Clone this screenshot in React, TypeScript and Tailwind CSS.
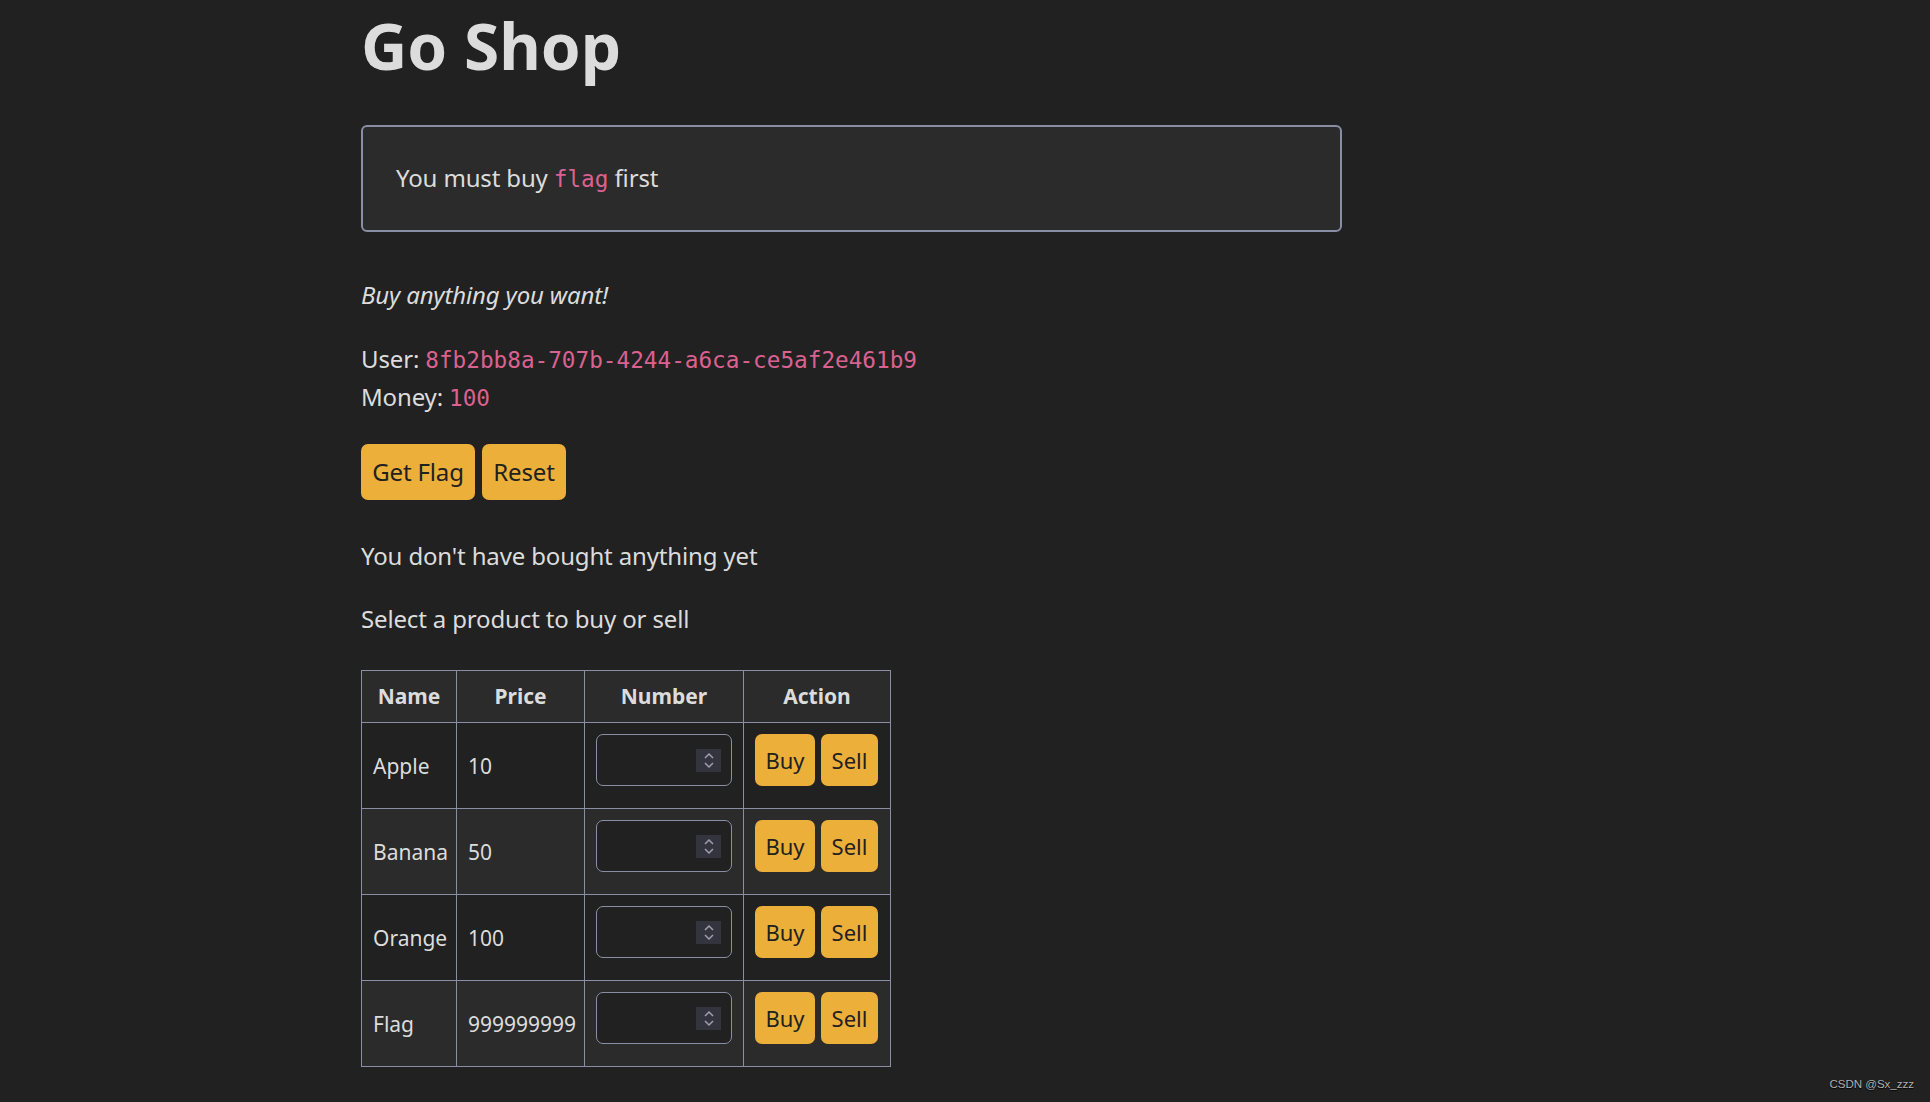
import React from "react";

const products = [
  { name: "Apple", price: "10" },
  { name: "Banana", price: "50" },
  { name: "Orange", price: "100" },
  { name: "Flag", price: "999999999" },
];

function NumberInput() {
  return (
    <div className="mb-[11px] flex h-[52px] w-[136px] items-center justify-end rounded-[7px] border border-[#898ea4] bg-[#212121] pr-[10px]">
      <div className="flex h-[23px] w-[25px] items-center justify-center bg-[#34343e]">
        <svg width="14" height="19" viewBox="0 0 14 19" fill="none">
          <path d="M3 7 L7 3 L11 7" stroke="#a0a0ae" strokeWidth="1.5" />
          <path d="M3 12 L7 16 L11 12" stroke="#a0a0ae" strokeWidth="1.5" />
        </svg>
      </div>
    </div>
  );
}

export default function App() {
  return (
    <div className="relative min-h-screen bg-[#212121] font-['Noto_Sans',sans-serif] text-[#dcdcdc]">
      <div className="ml-[361px] w-[981px] pb-[34px]">
        <h1 className="pt-[9px] text-[64px] font-bold leading-[74px] text-[#dcdcdc]">Go Shop</h1>

        <div className="mt-[42px] rounded-[6px] border-2 border-[#898ea4] bg-[#2b2b2b] px-[33px] pt-[32px] pb-[33px] text-[24px] leading-[38px] tracking-[-0.15px]">
          You must buy{" "}
          <code className="font-['DejaVu_Sans_Mono',monospace] text-[22.7px] leading-none tracking-normal text-[#db6190]">flag</code>{" "}
          first
        </div>

        <p className="mt-[44px] text-[24px] italic leading-[38px] tracking-[-0.15px]">Buy anything you want!</p>

        <p className="mt-[26px] text-[24px] leading-[38px] tracking-[-0.15px]">
          User:{" "}
          <code className="font-['DejaVu_Sans_Mono',monospace] text-[22.7px] leading-none tracking-normal text-[#db6190]">
            8fb2bb8a-707b-4244-a6ca-ce5af2e461b9
          </code>
          <br />
          Money:{" "}
          <code className="font-['DejaVu_Sans_Mono',monospace] text-[22.7px] leading-none tracking-normal text-[#db6190]">100</code>
        </p>

        <div className="mt-[28px] flex gap-[7px]">
          <button className="flex h-[56px] w-[114px] items-center justify-center rounded-[7px] bg-[#ecb03a] text-[24px] tracking-[-0.15px] text-[#212121]">
            Get Flag
          </button>
          <button className="flex h-[56px] w-[84px] items-center justify-center rounded-[7px] bg-[#ecb03a] text-[24px] tracking-[-0.15px] text-[#212121]">
            Reset
          </button>
        </div>

        <p className="mt-[37px] text-[24px] leading-[38px] tracking-[-0.15px]">You don't have bought anything yet</p>
        <p className="mt-[25px] text-[24px] leading-[38px] tracking-[-0.15px]">Select a product to buy or sell</p>

        <table className="mt-[32px] w-[529px] table-fixed border-collapse text-[21px]">
          <colgroup>
            <col className="w-[95px]" />
            <col className="w-[128px]" />
            <col className="w-[159px]" />
            <col className="w-[147px]" />
          </colgroup>
          <thead>
            <tr className="bg-[#2b2b2b]">
              {["Name", "Price", "Number", "Action"].map((h) => (
                <th key={h} className="border border-[#898ea4] py-[11px] text-center font-bold leading-[29px]">
                  {h}
                </th>
              ))}
            </tr>
          </thead>
          <tbody>
            {products.map((p, i) => (
              <tr key={p.name} className={i % 2 === 1 ? "bg-[#2b2b2b]" : "bg-[#212121]"}>
                <td className="border border-[#898ea4] p-[11px] align-middle leading-[30px]">{p.name}</td>
                <td className="border border-[#898ea4] p-[11px] align-middle leading-[30px]">{p.price}</td>
                <td className="border border-[#898ea4] px-[11px] pt-[11px] pb-[11px] align-middle">
                  <NumberInput />
                </td>
                <td className="border border-[#898ea4] px-[11px] pt-[11px] pb-[11px] align-middle">
                  <div className="mb-[11px] flex gap-[6px]">
                    <button className="flex h-[52px] w-[60px] items-center justify-center rounded-[7px] bg-[#ecb03a] text-[22px] text-[#212121]">
                      Buy
                    </button>
                    <button className="flex h-[52px] w-[57px] items-center justify-center rounded-[7px] bg-[#ecb03a] text-[22px] text-[#212121]">
                      Sell
                    </button>
                  </div>
                </td>
              </tr>
            ))}
          </tbody>
        </table>
      </div>

      <div className="absolute right-[16px] bottom-[9px] font-['Liberation_Sans',sans-serif] text-[11.5px] text-[#b0b0b0] [text-shadow:0_1px_1px_#000]">
        CSDN @Sx_zzz
      </div>
    </div>
  );
}
